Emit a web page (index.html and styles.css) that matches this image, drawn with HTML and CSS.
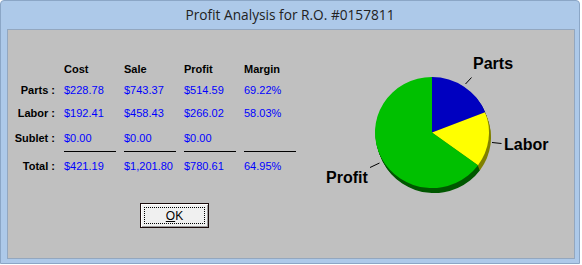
FILE: index.html
```html
<!DOCTYPE html>
<html lang="en">
<head>
  <meta charset="UTF-8" />
  <title>Profit Analysis</title>
  <link rel="stylesheet" href="styles.css">
</head>

<body>
  <div class="window">
    <div class="titlebar">Profit Analysis for R.O. #0157811</div>

    <div class="panel">
      <div class="summary">
        <div class="grid">
          <div class="row head">
            <span></span>
            <span>Cost</span>
            <span>Sale</span>
            <span>Profit</span>
            <span>Margin</span>
          </div>
          <div class="row">
            <span class="label">Parts :</span>
            <span class="val">$228.78</span>
            <span class="val">$743.37</span>
            <span class="val">$514.59</span>
            <span class="val">69.22%</span>
          </div>
          <div class="row">
            <span class="label">Labor :</span>
            <span class="val">$192.41</span>
            <span class="val">$458.43</span>
            <span class="val">$266.02</span>
            <span class="val">58.03%</span>
          </div>
          <div class="row">
            <span class="label">Sublet :</span>
            <span class="val">$0.00</span>
            <span class="val">$0.00</span>
            <span class="val">$0.00</span>
            <span class="val"></span>
          </div>
          <div class="row rule">
            <span></span>
            <span class="line"></span>
            <span class="line"></span>
            <span class="line"></span>
            <span class="line"></span>
          </div>
          <div class="row">
            <span class="label">Total :</span>
            <span class="val">$421.19</span>
            <span class="val">$1,201.80</span>
            <span class="val">$780.61</span>
            <span class="val">64.95%</span>
          </div>
        </div>

        <button class="ok-btn"><span class="focus"><u>O</u>K</span></button>
      </div>

      <!-- pie chart, drawn in page coordinates -->
      <svg class="chart" width="264" height="227" viewBox="310 30 264 227">
        <defs>
          <g id="side">
            <path fill="#000080" d="M432 132.5 L432 77 A57 55.5 0 0 1 485.03 112.16 Z"/>
            <path fill="#808000" d="M432 132.5 L485.03 112.16 A57 55.5 0 0 1 478.01 165.26 Z"/>
            <path fill="#005800" d="M432 132.5 L478.01 165.26 A57 55.5 0 1 1 432 77 Z"/>
          </g>
        </defs>
        <use href="#side" transform="translate(2 5)"/>
        <use href="#side" transform="translate(1.6 4)"/>
        <use href="#side" transform="translate(1.2 3)"/>
        <use href="#side" transform="translate(0.8 2)"/>
        <use href="#side" transform="translate(0.4 1)"/>

        <path fill="#0000c0" d="M432 132.5 L432 77 A57 55.5 0 0 1 485.03 112.16 Z"/>
        <path fill="#ffff00" d="M432 132.5 L485.03 112.16 A57 55.5 0 0 1 478.01 165.26 Z"/>
        <path fill="#00c000" d="M432 132.5 L478.01 165.26 A57 55.5 0 1 1 432 77 Z"/>

        <g stroke="#000" stroke-width="1">
          <line x1="465.5" y1="84" x2="471.5" y2="77.5"/>
          <line x1="492" y1="142.5" x2="501.5" y2="143.5"/>
          <line x1="370" y1="167.5" x2="379.5" y2="163"/>
        </g>

        <text class="pie-label" x="473" y="69">Parts</text>
        <text class="pie-label" x="504" y="150">Labor</text>
        <text class="pie-label" x="326" y="183">Profit</text>
      </svg>
    </div>
  </div>
</body>
</html>
```

FILE: styles.css
```css
body {
  margin: 0;
  background: white;
  font-family: 'Liberation Sans', Arial, sans-serif;
}

/* window frame */
.window {
  box-sizing: border-box;
  width: 580px;
  height: 264px;
  background: #adc9e9;
  border: 1px solid #8ba6c6;
  border-radius: 4px 4px 0 0;
  display: flex;
  flex-direction: column;
}

.titlebar {
  height: 28px;
  line-height: 28px;
  text-align: center;
  font-family: 'Open Sans', 'Noto Sans', sans-serif;
  font-size: 13.7px;
  color: #222;
}

/* grey client area */
.panel {
  flex: 1;
  margin: 0 4px 4px 6px;
  background: #c0c0c0;
  border: 1px solid #93a7bf;
  display: flex;
}

.summary {
  width: 302px;
  padding-top: 32px;
  display: flex;
  flex-direction: column;
}

/* figures table */
.grid {
  display: flex;
  flex-direction: column;
}

.row {
  display: grid;
  grid-template-columns: 56px repeat(4, 60px);
  height: 14px;
  line-height: 14px;
  font-size: 11px;
  align-items: center;
}

.row:nth-child(2) { margin-top: 7px; }
.row:nth-child(3) { margin-top: 9px; }
.row:nth-child(4) { margin-top: 11px; }
.row:nth-child(6) { margin-top: 7px; }

.row.head {
  font-weight: bold;
  color: black;
}

.row.rule {
  height: 1px;
  margin-top: 6px;
}

.line {
  width: 52px;
  height: 1px;
  background: black;
}

.label {
  text-align: right;
  padding-right: 9px;
  font-weight: bold;
  color: black;
}

.val {
  color: #0000ff;
}

/* OK button */
.ok-btn {
  margin: 30px 0 0 132px;
  width: 69px;
  height: 25px;
  padding: 0;
  background: #f0f0f0;
  border: 1px solid #1a0a0a;
  box-shadow: inset 1px 1px 0 #ffffff, inset -1px -1px 0 #a0a0a0;
  font-family: 'Liberation Sans', Arial, sans-serif;
  font-size: 12px;
  color: black;
  display: flex;
  align-items: stretch;
}

.focus {
  flex: 1;
  margin: 3px;
  border: 1px dotted #000;
  display: flex;
  align-items: center;
  justify-content: center;
}

.chart {
  display: block;
}

.pie-label {
  font-family: 'Liberation Sans', Arial, sans-serif;
  font-weight: bold;
  font-size: 16px;
  fill: black;
}
```
